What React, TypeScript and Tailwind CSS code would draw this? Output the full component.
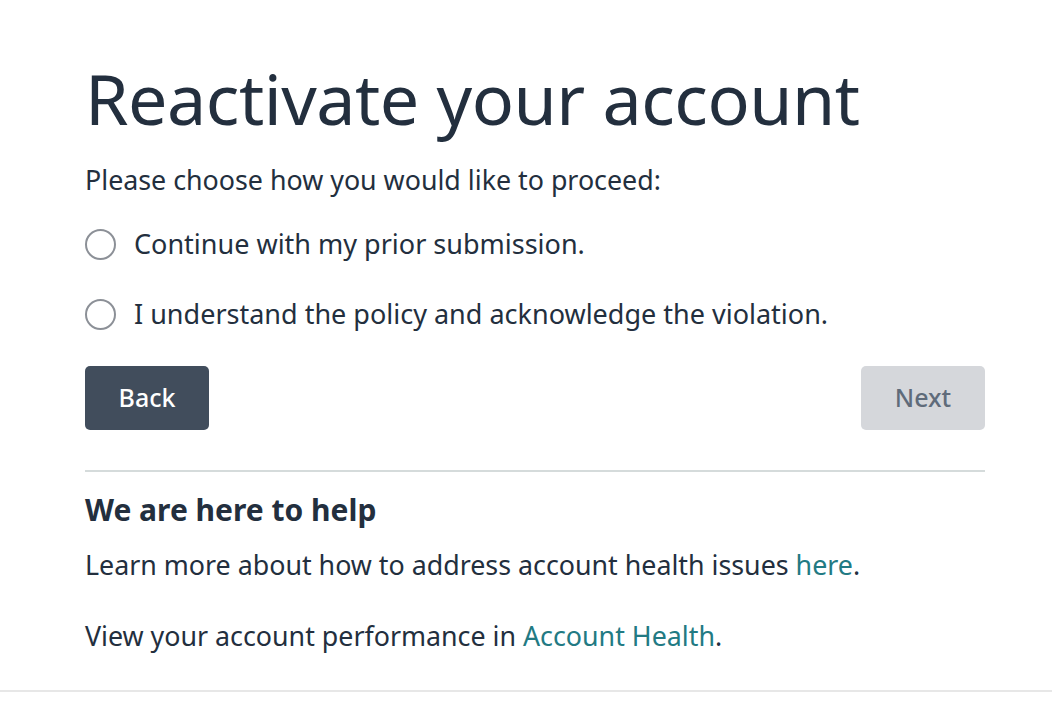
import React from "react";

const font = { fontFamily: '"Noto Sans", "Open Sans", Arial, sans-serif' };

function Radio({ label }: { label: string }) {
  return (
    <label className="flex items-center gap-[18px] cursor-pointer">
      <span className="h-[31px] w-[31px] shrink-0 rounded-full border-2 border-[#8c9097] bg-white" />
      <span className="text-[27px] leading-[32px] text-[#232f3e]">{label}</span>
    </label>
  );
}

export default function App() {
  return (
    <div className="min-h-screen bg-white" style={font}>
      <div className="border-b-2 border-[#e7e7e7]">
        <div className="ml-[85px] w-[900px] pt-[56px] pb-[38px]">
          <h1 className="text-[70px] leading-[84px] font-normal text-[#232f3e] tracking-[-0.5px]">
            Reactivate your account
          </h1>
          <p className="mt-[24px] text-[26.8px] leading-[32px] text-[#232f3e]">
            Please choose how you would like to proceed:
          </p>
          <div className="mt-[32px] flex flex-col gap-[38px]">
            <Radio label="Continue with my prior submission." />
            <Radio label="I understand the policy and acknowledge the violation." />
          </div>
          <div className="mt-[36px] flex justify-between">
            <button className="h-[64px] w-[124px] rounded-[5px] bg-[#414d5c] text-[25px] font-medium text-white">
              Back
            </button>
            <button className="h-[64px] w-[124px] rounded-[5px] bg-[#d5d7db] text-[25px] font-medium text-[#5f6b7a]">
              Next
            </button>
          </div>
          <div className="mt-[40px] border-t-2 border-[#d5dbdb] pt-[20px]">
            <h2 className="text-[30px] leading-[36px] font-bold text-[#232f3e]">We are here to help</h2>
            <p className="mt-[21px] text-[26.8px] leading-[32px] text-[#232f3e]">
              Learn more about how to address account health issues{" "}
              <a className="text-[#227a83]" href="#">here</a>.
            </p>
            <p className="mt-[39px] text-[26.8px] leading-[32px] text-[#232f3e]">
              View your account performance in{" "}
              <a className="text-[#227a83]" href="#">Account Health</a>.
            </p>
          </div>
        </div>
      </div>
    </div>
  );
}
